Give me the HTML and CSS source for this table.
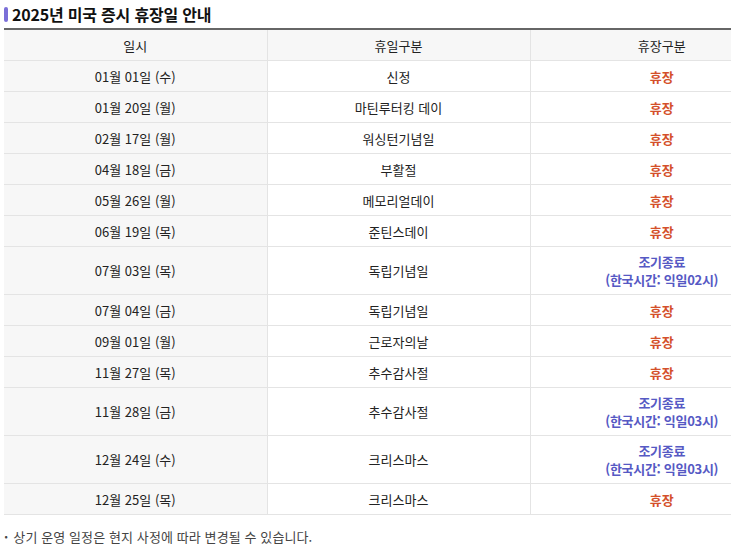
FILE: index.html
```html
<!DOCTYPE html>
<html lang="ko">
<head>
<meta charset="utf-8">
<link rel="stylesheet" href="styles.css">
</head>
<body>
<div class="wrap">
  <h2 class="title"><span class="bar"></span>2025년 미국 증시 휴장일 안내</h2>
  <table class="tbl">
    <thead>
      <tr><th>일시</th><th>휴일구분</th><th>휴장구분</th></tr>
    </thead>
    <tbody>
      <tr><td class="d">01월 01일 (수)</td><td>신정</td><td class="off">휴장</td></tr>
      <tr><td class="d">01월 20일 (월)</td><td>마틴루터킹 데이</td><td class="off">휴장</td></tr>
      <tr><td class="d">02월 17일 (월)</td><td>워싱턴기념일</td><td class="off">휴장</td></tr>
      <tr><td class="d">04월 18일 (금)</td><td>부활절</td><td class="off">휴장</td></tr>
      <tr><td class="d">05월 26일 (월)</td><td>메모리얼데이</td><td class="off">휴장</td></tr>
      <tr><td class="d">06월 19일 (목)</td><td>준틴스데이</td><td class="off">휴장</td></tr>
      <tr class="tall"><td class="d">07월 03일 (목)</td><td>독립기념일</td><td class="early">조기종료<br>(한국시간: 익일02시)</td></tr>
      <tr><td class="d">07월 04일 (금)</td><td>독립기념일</td><td class="off">휴장</td></tr>
      <tr><td class="d">09월 01일 (월)</td><td>근로자의날</td><td class="off">휴장</td></tr>
      <tr><td class="d">11월 27일 (목)</td><td>추수감사절</td><td class="off">휴장</td></tr>
      <tr class="tall"><td class="d">11월 28일 (금)</td><td>추수감사절</td><td class="early">조기종료<br>(한국시간: 익일03시)</td></tr>
      <tr class="tall"><td class="d">12월 24일 (수)</td><td>크리스마스</td><td class="early">조기종료<br>(한국시간: 익일03시)</td></tr>
      <tr><td class="d">12월 25일 (목)</td><td>크리스마스</td><td class="off">휴장</td></tr>
    </tbody>
  </table>
  <p class="note">상기 운영 일정은 현지 사정에 따라 변경될 수 있습니다.</p>
</div>
</body>
</html>
```
FILE: styles.css
```css
html, body {
  margin: 0;
  padding: 0;
  background: #fff;
  overflow: hidden;
}
body {
  font-family: "Noto Sans CJK KR", "Noto Sans", sans-serif;
  color: #222;
}
.wrap {
  padding: 4px 0 0 4px;
  width: 789px;
}
.title {
  display: flex;
  align-items: center;
  gap: 4px;
  margin: 0;
  height: 20px;
  font-size: 16px;
  font-weight: 700;
  color: #111;
  letter-spacing: -0.2px;
  line-height: 20px;
}
.bar {
  width: 4px;
  height: 15px;
  border-radius: 2px;
  background: #7b6fd8;
}
.tbl {
  margin-top: 4px;
  width: 789px;
  border-collapse: collapse;
  table-layout: fixed;
  border-top: 2px solid #666;
  font-size: 13px;
}
.tbl th, .tbl td {
  height: 30px;
  padding: 0;
  text-align: center;
  vertical-align: middle;
  border-bottom: 1px solid #e4e4e4;
  border-left: 1px solid #e4e4e4;
  line-height: 17px;
  color: #222;
}
.tbl th:first-child, .tbl td:first-child {
  border-left: none;
}
.tbl th {
  background: #f7f7f7;
  font-weight: 400;
}
.tbl td.d {
  background: #f7f7f7;
}
.tbl tr.tall td {
  height: 47px;
}
.tbl td.off {
  color: #d4502a;
  font-weight: 700;
}
.tbl td.early {
  color: #5659c4;
  font-weight: 700;
  line-height: 18px;
  letter-spacing: -0.3px;
}
.note {
  margin: 12px 0 0 0;
  font-size: 13px;
  color: #444;
  letter-spacing: 0.1px;
}
.note::before {
  content: "·";
  font-weight: 700;
  margin-right: 5px;
}
```
